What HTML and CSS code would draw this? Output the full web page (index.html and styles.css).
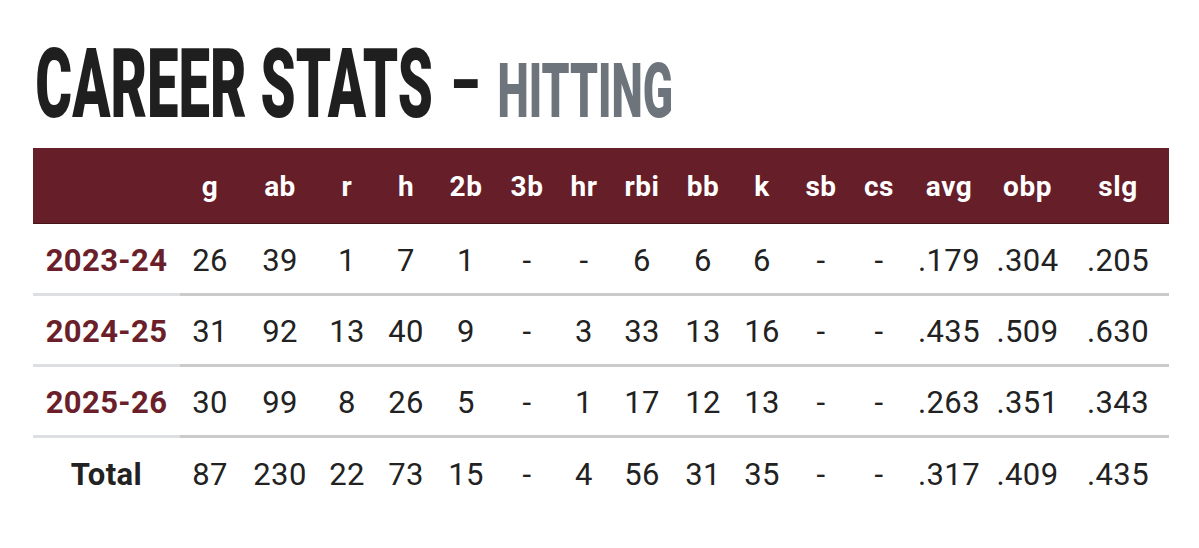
FILE: index.html
```html
<!DOCTYPE html>
<html lang="en">
<head>
<meta charset="utf-8">
<title>Career Stats - Hitting</title>
<link rel="stylesheet" href="styles.css">
</head>
<body>
<div class="page">
  <h1 class="title"><span class="title-main">CAREER STATS</span><span class="title-dash">–</span><span class="title-sub">HITTING</span></h1>
  <table class="stats">
    <colgroup>
      <col class="c-label"><col class="c-g"><col class="c-ab"><col class="c-r"><col class="c-h"><col class="c-2b"><col class="c-3b"><col class="c-hr"><col class="c-rbi"><col class="c-bb"><col class="c-k"><col class="c-sb"><col class="c-cs"><col class="c-avg"><col class="c-obp"><col class="c-slg">
    </colgroup>
    <thead>
      <tr><th></th><th>g</th><th>ab</th><th>r</th><th>h</th><th>2b</th><th>3b</th><th>hr</th><th>rbi</th><th>bb</th><th>k</th><th>sb</th><th>cs</th><th>avg</th><th>obp</th><th>slg</th></tr>
    </thead>
    <tbody>
      <tr><th class="season">2023-24</th><td>26</td><td>39</td><td>1</td><td>7</td><td>1</td><td>-</td><td>-</td><td>6</td><td>6</td><td>6</td><td>-</td><td>-</td><td>.179</td><td>.304</td><td>.205</td></tr>
      <tr><th class="season">2024-25</th><td>31</td><td>92</td><td>13</td><td>40</td><td>9</td><td>-</td><td>3</td><td>33</td><td>13</td><td>16</td><td>-</td><td>-</td><td>.435</td><td>.509</td><td>.630</td></tr>
      <tr><th class="season">2025-26</th><td>30</td><td>99</td><td>8</td><td>26</td><td>5</td><td>-</td><td>1</td><td>17</td><td>12</td><td>13</td><td>-</td><td>-</td><td>.263</td><td>.351</td><td>.343</td></tr>
      <tr class="total"><th class="season">Total</th><td>87</td><td>230</td><td>22</td><td>73</td><td>15</td><td>-</td><td>4</td><td>56</td><td>31</td><td>35</td><td>-</td><td>-</td><td>.317</td><td>.409</td><td>.435</td></tr>
    </tbody>
  </table>
</div>
</body>
</html>
```

FILE: styles.css
```css
html, body {
  margin: 0;
  padding: 0;
  background: #ffffff;
}

.page {
  padding: 36px 0 0 33px;
  font-family: Roboto, "Liberation Sans", sans-serif;
}

.title {
  margin: 0;
  display: block;
  width: max-content;
  white-space: nowrap;
  line-height: 96px;
  height: 96px;
  font-weight: 900;
  transform: scaleX(0.585);
  transform-origin: 0 0;
  padding-left: 4px;
}

.title-main {
  font-size: 96px;
  color: #1f1f1f;
}

.title-dash {
  font-size: 80px;
  font-weight: 700;
  color: #1f1f1f;
  margin: 0 30px 0 30px;
  vertical-align: 6px;
}

.title-sub {
  font-size: 76px;
  color: #6e747b;
}

.stats {
  margin-top: 16px;
  border-collapse: collapse;
  table-layout: fixed;
  width: 1136px;
}

.c-label { width: 147px; }
.c-g { width: 60px; }
.c-ab { width: 80px; }
.c-r { width: 54px; }
.c-h { width: 64px; }
.c-2b { width: 56px; }
.c-3b { width: 66px; }
.c-hr { width: 48px; }
.c-rbi { width: 68px; }
.c-bb { width: 54px; }
.c-k { width: 64px; }
.c-sb { width: 54px; }
.c-cs { width: 62px; }
.c-avg { width: 78px; }
.c-obp { width: 79px; }
.c-slg { width: 102px; }

.stats thead tr {
  background: #661e29;
  height: 75px;
}

.stats thead th {
  color: #ffffff;
  font-size: 28px;
  font-weight: 700;
  letter-spacing: 0.5px;
  text-align: center;
  padding: 2px 0 0 0;
  border-bottom: 1px solid #45131a;
}

.stats tbody tr {
  height: 71px;
}

.stats tbody td,
.stats tbody th {
  text-align: center;
  vertical-align: middle;
  padding: 4px 0 0 0;
  font-size: 31px;
  letter-spacing: 0.4px;
  border-bottom: 3px solid #cbcbcb;
}

.stats tbody td {
  color: #222222;
  font-weight: 400;
}

.stats tbody th.season {
  color: #6a1f2b;
  font-weight: 700;
  border-bottom-color: #dedfe2;
}

.stats tbody tr.total td,
.stats tbody tr.total th {
  border-bottom: none;
}

.stats tbody tr.total th.season {
  color: #222222;
}
```
